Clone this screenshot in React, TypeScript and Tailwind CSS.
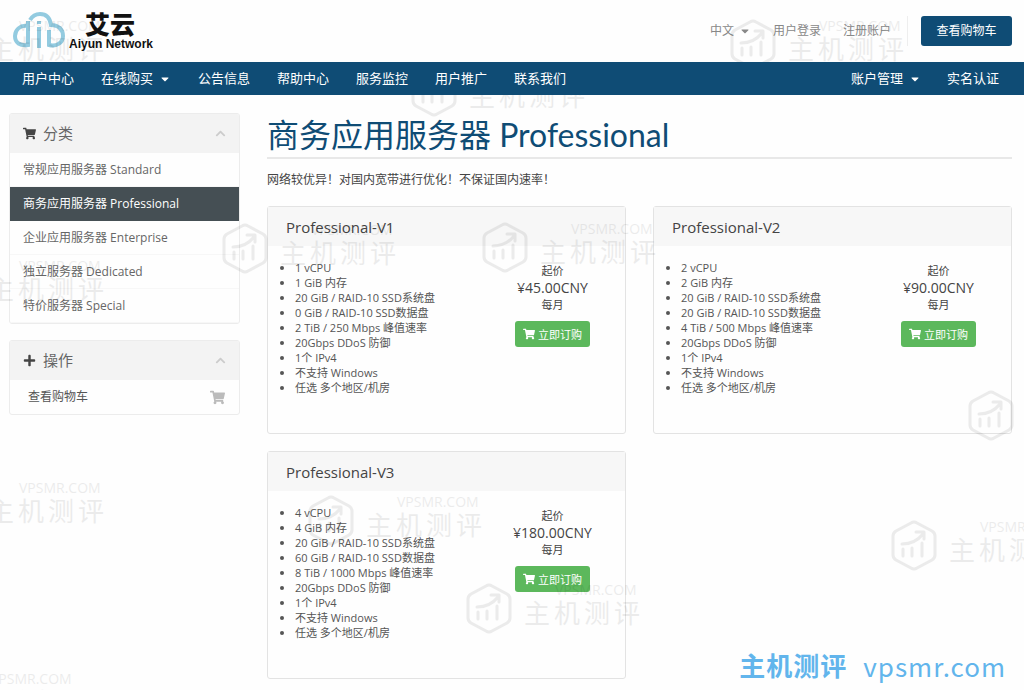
import type { ReactNode } from 'react';
import { FaChevronUp, FaCaretDown, FaPlus, FaShoppingCart } from 'react-icons/fa';

type Plan = {
  name: string;
  price: string;
  specs: string[];
};

const mainNav = ['用户中心', '在线购买', '公告信息', '帮助中心', '服务监控', '用户推广', '联系我们'];

const categories = [
  '常规应用服务器 Standard',
  '商务应用服务器 Professional',
  '企业应用服务器 Enterprise',
  '独立服务器 Dedicated',
  '特价服务器 Special',
];

const commonSpecs = ['20Gbps DDoS 防御', '1个 IPv4', '不支持 Windows', '任选 多个地区/机房'];

const plans: Plan[] = [
  {
    name: 'Professional-V1',
    price: '¥45.00CNY',
    specs: ['1 vCPU', '1 GiB 内存', '20 GiB / RAID-10 SSD系统盘', '0 GiB / RAID-10 SSD数据盘', '2 TiB / 250 Mbps 峰值速率', ...commonSpecs],
  },
  {
    name: 'Professional-V2',
    price: '¥90.00CNY',
    specs: ['2 vCPU', '2 GiB 内存', '20 GiB / RAID-10 SSD系统盘', '20 GiB / RAID-10 SSD数据盘', '4 TiB / 500 Mbps 峰值速率', ...commonSpecs],
  },
  {
    name: 'Professional-V3',
    price: '¥180.00CNY',
    specs: ['4 vCPU', '4 GiB 内存', '20 GiB / RAID-10 SSD系统盘', '60 GiB / RAID-10 SSD数据盘', '8 TiB / 1000 Mbps 峰值速率', ...commonSpecs],
  },
];

// Stamps scattered over the page
const stamps = [
  { x: -70, y: 19 },
  { x: 730, y: 19 },
  { x: 411, y: 66 },
  { x: 222, y: 223 },
  { x: 482, y: 222 },
  { x: -70, y: 259 },
  { x: 968, y: 390 },
  { x: -70, y: 481 },
  { x: 308, y: 495 },
  { x: 891, y: 520 },
  { x: 466, y: 583 },
  { x: -99, y: 672 },
];

const CloudLogo = () => (
  <svg viewBox="0 0 52 38" className="h-[38px] w-[52px]" fill="none" stroke="#93cbe0" strokeWidth="4" aria-hidden="true">
    <path d="M14 14 C7 13 2 18 2 24 C2 31 7 34 15 33 V9" />
    <path d="M17 8 C20 3 24 2 27 2 C33 2 37 6 38 13 C46 13 50 18 50 24 C50 31 43 35 36 33 V18" />
    <path d="M26 15 V36 M26 9 V12" />
  </svg>
);

const Stamp = ({ x, y }: { x: number; y: number }) => (
  <div className="absolute flex gap-3 text-black" style={{ left: x, top: y }}>
    <svg viewBox="0 0 46 51" className="h-[51px] w-[46px] shrink-0" fill="none" stroke="currentColor" strokeWidth="3" strokeLinejoin="round" strokeLinecap="round">
      <path d="M20 3 Q23 1 26 3 L41 11 Q44 13 44 16 V35 Q44 38 41 40 L26 48 Q23 50 20 48 L5 40 Q2 38 2 35 V16 Q2 13 5 11 Z" />
      <path d="M11 24 Q24 24 32 14 M25 12 H33 V19 M12 29 V36 M21 28 V36 M31 23 V36" />
    </svg>
    <div className="flex flex-col">
      <span className="pl-[31px] text-[14px] leading-[13px] font-medium">VPSMR.COM</span>
      <span className="text-[26px] leading-[34px] tracking-[4px] whitespace-nowrap">主机测评</span>
    </div>
  </div>
);

const SidePanel = ({ icon, title, children }: { icon: ReactNode; title: string; children: ReactNode }) => (
  <section className="overflow-hidden rounded-[3px] border border-[#ececec]">
    <h2 className="flex h-[39px] items-center gap-[7px] bg-[#f3f3f3] px-[13px] text-[15px] text-[#666]">
      <span className="text-[13px] text-[#444]">{icon}</span>
      {title}
      <button type="button" aria-label="收起" className="ml-auto text-[11px] text-[#ccc]">
        <FaChevronUp />
      </button>
    </h2>
    {children}
  </section>
);

const PlanCard = ({ plan }: { plan: Plan }) => (
  <article className="h-[228px] rounded-[3px] border border-[#e3e3e3]">
    <h3 className="h-[39px] bg-[#f7f7f7] px-[18px] text-[15px] leading-[41px] text-[#444]">{plan.name}</h3>
    <div className="flex justify-between pt-[14px]">
      <ul className="list-disc pl-[27px] text-[11px] leading-[15px] text-[#555]">
        {plan.specs.map(spec => <li key={spec}>{spec}</li>)}
      </ul>
      <div className="flex w-[145px] flex-col items-center pt-[2px] text-[11px] leading-[17px] text-[#444]">
        <span>起价</span>
        <span className="text-[14px]">{plan.price}</span>
        <span>每月</span>
        <button type="button" className="mt-2 flex h-[26px] items-center gap-[3px] rounded-[3px] bg-[#5cb85c] px-2 text-[11px] text-white">
          <FaShoppingCart className="text-[12px]" />
          立即订购
        </button>
      </div>
    </div>
  </article>
);

const App = () => {
  return (
    <div className="relative min-h-screen overflow-hidden bg-[#fefefe] font-['Open_Sans','Noto_Sans_CJK_SC',sans-serif] text-[12px] text-[#444]">
      <header className="flex h-[62px] items-center justify-between pr-3 pl-[13px]">
        <a href="#" className="flex items-center gap-1">
          <CloudLogo />
          <span className="flex flex-col text-[#111]">
            <span className="pl-4 text-[25px] leading-[25px] font-black">艾云</span>
            <span className="font-['Liberation_Sans',sans-serif] text-[12px] leading-[14px] font-bold">Aiyun Network</span>
          </span>
        </a>
        <div className="flex items-center text-[#888]">
          <button type="button" className="flex items-center gap-[5px]">中文 <FaCaretDown className="text-[12px]" /></button>
          <a href="#" className="ml-[22px]">用户登录</a>
          <a href="#" className="ml-[22px]">注册账户</a>
          <span className="ml-4 h-[30px] border-l border-[#eee]" />
          <a href="#" className="ml-[13px] flex h-[30px] w-[91px] items-center justify-center rounded-[3px] bg-[#0f4c75] text-white">查看购物车</a>
        </div>
      </header>

      <nav className="relative z-10 flex h-[33px] items-center justify-between bg-[#0f4c75] pr-[25px] pl-[22px] text-[13px] text-white">
        <div className="flex gap-[27px]">
          {mainNav.map(item => (
            <a key={item} href="#" className="flex items-center gap-[6px]">
              {item}
              {item === '在线购买' && <FaCaretDown className="text-[12px]" />}
            </a>
          ))}
        </div>
        <div className="flex gap-[26px]">
          <a href="#" className="flex items-center gap-[6px]">账户管理 <FaCaretDown className="text-[12px]" /></a>
          <a href="#">实名认证</a>
        </div>
      </nav>

      <div className="flex items-start gap-[27px] pt-[18px] pr-3 pb-[10px] pl-[9px]">
        <aside className="flex w-[231px] shrink-0 flex-col gap-4">
          <SidePanel icon={<FaShoppingCart />} title="分类">
            {categories.map((name, i) => (
              <a
                key={name}
                href="#"
                className={i === 1 ? 'flex h-[34px] items-center bg-[#454f54] px-[13px] text-white' : 'flex h-[34px] items-center border-b border-[#f7f7f7] px-[13px] text-[#666]'}
              >
                {name}
              </a>
            ))}
          </SidePanel>
          <SidePanel icon={<FaPlus />} title="操作">
            <a href="#" className="flex h-[34px] items-center justify-between pr-[14px] pl-[18px] text-[#555]">
              查看购物车
              <FaShoppingCart className="text-[15px] text-[#bbb]" />
            </a>
          </SidePanel>
        </aside>

        <main className="min-w-0 flex-1">
          <h1 className="h-[46px] border-b-2 border-[#e8e8e8] font-['Lato','Noto_Sans_CJK_SC',sans-serif] text-[32px] leading-[44px] text-[#0f4c75]">商务应用服务器 Professional</h1>
          <p className="pt-3 text-[12px] leading-[18px]">网络较优异！对国内宽带进行优化！不保证国内速率！</p>
          <div className="mt-[17px] grid grid-cols-2 gap-x-[27px] gap-y-[17px]">
            {plans.map(plan => <PlanCard key={plan.name} plan={plan} />)}
          </div>
        </main>
      </div>

      <div className="pointer-events-none absolute inset-0 overflow-hidden opacity-[0.07]" aria-hidden="true">
        {stamps.map(stamp => <Stamp key={`${stamp.x},${stamp.y}`} x={stamp.x} y={stamp.y} />)}
      </div>
      <p className="absolute right-[18px] bottom-2 flex gap-4 text-[26px] leading-8 tracking-[1px] text-[#62b5ec]">
        <span className="font-bold">主机测评</span>
        <span className="font-['Noto_Sans_CJK_SC',sans-serif]">vpsmr.com</span>
      </p>
    </div>
  );
};

export default App;
